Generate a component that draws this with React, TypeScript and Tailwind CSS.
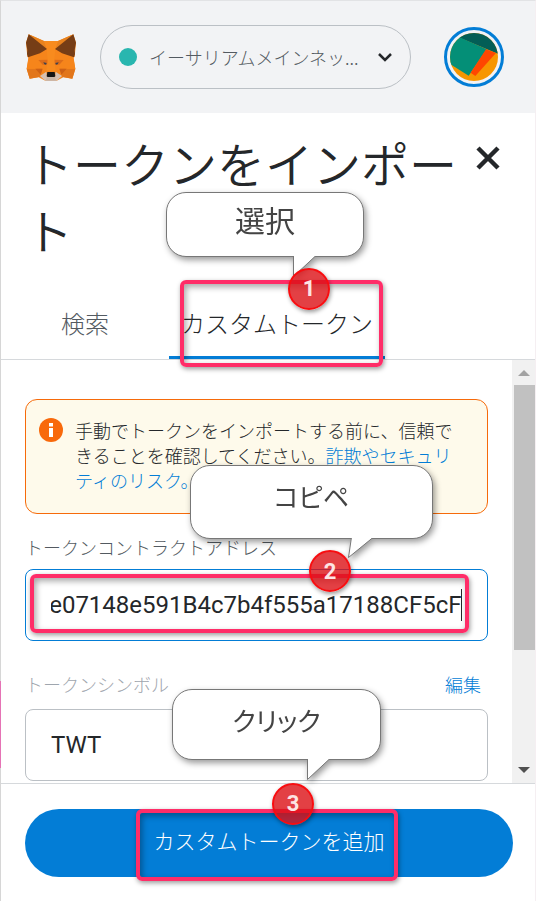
import React, { useEffect, useRef } from "react";

const FoxLogo = () => (
  <svg
    viewBox="78 100 150 141"
    className="w-[50px] h-[47px] shrink-0"
    role="img"
    aria-label="MetaMask"
  >
    <path d="M86 101 132 121H174L220 101 228 126 224 168 220 172 226 205 217 234 190 230 170 240H136L116 230 89 234 80 205 86 172 82 168 78 126Z" fill="#f6851b" />
    {/* cheeks and brows */}
    <path d="M80 204 126 204 120 228 89 234ZM226 204 180 204 186 228 217 234Z" fill="#e2761b" />
    <path d="M86 101 132 121 140 144ZM220 101 174 121 166 144Z" fill="#e8821e" />
    <path d="M85 172 118 178 110 204 80 204ZM221 172 188 178 196 204 226 204Z" fill="#f6851b" />
    <path d="M115 178 143 177 145 192 128 192ZM191 178 163 177 161 192 178 192Z" fill="#dd6d1a" />
    <path d="M106 204 128 204 122 222ZM200 204 178 204 184 222Z" fill="#cd6116" />
    <path d="M132 121 174 121 166 145 163 177 167 212H139L143 177 140 145Z" fill="#f88b1e" />
    {/* ears */}
    <path d="M86 101 141 145 120 158 84 170 81 160 82 148 78 126Z" fill="#763d16" />
    <path d="M220 101 165 145 186 158 222 170 225 160 224 148 228 126Z" fill="#763d16" />
    {/* eyes and muzzle */}
    <path d="M130 185 140 187 138 192 133 191ZM176 185 166 187 168 192 173 191Z" fill="#3b4250" />
    <path d="M139 213 120 226 136 240H170L186 226 167 213 165 228H141Z" fill="#d7c1b3" />
    <path d="M142 214H164L166 227 163 229H143L140 227Z" fill="#161616" />
    <path d="M141 229H165L169 240H137Z" fill="#c9b6a8" />
  </svg>
);

const Avatar = () => (
  <button
    aria-label="アカウント"
    className="w-[60px] h-[60px] shrink-0 rounded-full border-[3px] border-[#037dd6] bg-[#f2f3f5] p-[3px]"
  >
    <svg viewBox="552 98 144 144" className="w-full h-full rounded-full">
      <rect x="552" y="98" width="144" height="144" fill="#f79600" />
      <path d="M552 98H696V160L584 114Z" fill="#035e56" />
      <path d="M552 98 584 112 662 147 608 226 552 191Z" fill="#048f77" />
      <path d="M660 147 690 158 628 227 614 217Z" fill="#ff4600" />
    </svg>
  </button>
);

interface IBalloonProps {
  text: string;
  className: string;
  tailClass: string;
  tail: string;
}

const Balloon = ({ text, className, tailClass, tail }: IBalloonProps) => (
  <div
    className={`absolute z-10 rounded-[20px] border border-[#777] bg-white text-center font-normal text-[#444] [font-feature-settings:'palt'] drop-shadow-[2px_3px_3px_rgba(0,0,0,0.4)] ${className}`}
  >
    {text}
    <svg viewBox="0 0 28 22" className={`absolute top-full h-[22px] w-7 ${tailClass}`}>
      <path d={tail} fill="#fff" stroke="#777" />
    </svg>
  </div>
);

const Badge = ({ n, className }: { n: number; className: string }) => (
  <span
    className={`absolute z-20 flex h-[42px] w-[42px] items-center justify-center rounded-full border-2 border-[#f80d10] bg-[#dc1015]/80 font-['Roboto',sans-serif] text-[22px] font-bold text-[#fde4e4] shadow-[1px_2px_4px_rgba(0,0,0,0.4)] ${className}`}
  >
    {n}
  </span>
);

const Marker = ({ className }: { className: string }) => (
  <span
    className={`pointer-events-none absolute rounded-md border-4 border-[#ff2d68] shadow-[1px_2px_5px_rgba(0,0,0,0.4),inset_2px_3px_6px_rgba(0,0,0,0.35)] ${className}`}
  />
);

const App = () => {
  const addressRef = useRef<HTMLInputElement>(null);

  // keep the end of the address in view
  useEffect(() => {
    if (addressRef.current) {
      addressRef.current.scrollLeft = addressRef.current.scrollWidth;
    }
  }, []);

  return (
    <div className="min-h-screen border-x border-t border-l-[#d6d6d6] border-r-[#f5eff2] border-t-[#e2e3e5] bg-white font-['Noto_Sans_CJK_JP',sans-serif] font-light text-[#24272a]">
      <header className="flex h-28 items-center bg-[#f2f3f5] pl-[25px] pr-[31px]">
        <FoxLogo />
        <button className="ml-6 mr-[33px] flex h-16 min-w-0 flex-1 items-center rounded-full border border-[#bbc0c5] pl-[18px] pr-[17px]">
          <span className="h-[18px] w-[18px] shrink-0 rounded-full bg-[#29b6af]" />
          <span className="ml-3 min-w-0 flex-1 text-left text-lg text-[#535a61]">
            イーサリアムメインネッ...
          </span>
          <svg viewBox="0 0 16 10" className="h-[10px] w-4 shrink-0">
            <path d="M2 2 8 8 14 2" fill="none" stroke="#24272a" strokeWidth="2.5" />
          </svg>
        </button>
        <Avatar />
      </header>

      <div className="relative flex items-start gap-3 pl-6 pr-[35px] pt-4">
        <h1 className="flex-1 text-5xl leading-[67px] font-[350]">トークンをインポート</h1>
        <button aria-label="閉じる" className="mt-[17px] h-6 w-6">
          <svg viewBox="0 0 24 24" className="h-6 w-6">
            <path d="M2 2 22 22M22 2 2 22" stroke="#24272a" strokeWidth="4.5" />
          </svg>
        </button>
        <Balloon
          text="選択"
          className="left-[165px] top-[79px] h-[65px] w-[198px] text-[30px] leading-[52px]"
          tailClass="left-[125px]"
          tail="M1.5 -1V20.5L24 -0.5"
        />
      </div>

      <div role="tablist" className="mt-7 flex gap-12 border-b border-[#d6d9dc] pl-12">
        <button
          role="tab"
          aria-selected="false"
          className="border-b-[3px] border-transparent px-3 pt-[14px] pb-[15px] text-2xl leading-9 text-[#535a61]"
        >
          検索
        </button>
        <button
          role="tab"
          aria-selected="true"
          className="relative border-b-[3px] border-[#037dd6] px-3 pt-[14px] pb-[15px] text-2xl leading-9"
        >
          カスタムトークン
          <Marker className="-top-[11px] left-[11px] h-[87px] w-[203px]" />
          <Badge n={1} className="-top-[23px] left-[119px]" />
        </button>
      </div>

      <div className="relative flex">
        <span className="absolute -left-px top-[321px] h-[87px] w-px bg-[#e573b5]" />
        <form className="min-w-0 flex-1 px-6 pt-[39px] pb-[2px]">
          <div className="relative flex items-start gap-3 rounded-xl border border-[#f66a0a] bg-[#fefaeb] pt-[18px] pr-6 pb-5 pl-[13px]">
            <svg viewBox="0 0 24 24" className="h-6 w-6 shrink-0">
              <circle cx="12" cy="12" r="12" fill="#f8690b" />
              <rect x="10" y="5" width="4" height="3.5" fill="#fff" />
              <rect x="10" y="10" width="4" height="9" fill="#fff" />
            </svg>
            <p className="text-lg leading-[25px]">
              手動でトークンをインポートする前に、信頼できることを確認してください。
              <a href="#risk" className="text-[#037dd6]">
                詐欺やセキュリティのリスク。
              </a>
            </p>
            <Balloon
              text="コピペ"
              className="left-[164px] top-[65px] h-[74px] w-[243px] text-[26px] leading-[60px]"
              tailClass="left-[156px]"
              tail="M4.5 -1 1.5 19.5 26 -0.5"
            />
          </div>

          <label htmlFor="address" className="mt-5 mb-2 block text-lg leading-[27px] text-[#535a61]">
            トークンコントラクトアドレス
          </label>
          <div className="relative flex h-[72px] items-center rounded-lg border border-[#037dd6] pr-[25px] pl-[25px]">
            <input
              id="address"
              ref={addressRef}
              defaultValue="0xe07148e591B4c7b4f555a17188CF5cF"
              className="h-8 w-full border-r border-[#24272a] font-['Roboto',sans-serif] text-2xl font-normal outline-none"
            />
            <Marker className="top-1 right-[18px] left-1 h-[59px]" />
            <Badge n={2} className="-top-5 left-[283px]" />
          </div>

          <div className="mt-[30px] mb-[11px] flex justify-between text-lg leading-[27px]">
            <label htmlFor="symbol" className="text-[#9fa6ae]">
              トークンシンボル
            </label>
            <button type="button" className="mr-[7px] text-[#037dd6]">
              編集
            </button>
          </div>
          <div className="relative">
            <input
              id="symbol"
              defaultValue="TWT"
              className="block h-[72px] w-full rounded-lg border border-[#bbc0c5] px-[25px] font-['Roboto',sans-serif] text-2xl font-normal outline-none"
            />
            <Balloon
              text="クリック"
              className="left-[147px] -top-5 h-[71px] w-[209px] text-[26px] leading-[60px]"
              tailClass="left-[133px]"
              tail="M1.5 -1V20.5L24 -0.5"
            />
          </div>
        </form>

        <div aria-hidden="true" className="flex w-[23px] flex-col items-center bg-[#f1f1f1]">
          <svg viewBox="0 0 12 6" className="mt-[10px] mb-[9px] h-[6px] w-3">
            <path d="M0 6 6 0 12 6Z" fill="#a3a3a3" />
          </svg>
          <span className="ml-[2px] h-[265px] w-[21px] bg-[#c1c1c1]" />
          <svg viewBox="0 0 12 6" className="mt-auto mb-[10px] h-[6px] w-3">
            <path d="M0 0 6 6 12 0Z" fill="#505050" />
          </svg>
        </div>
      </div>

      <footer className="border-t border-[#d6d9dc] pt-[25px] pr-[22px] pb-6 pl-6">
        <button className="relative block h-[68px] w-full rounded-full bg-[#037dd6] pb-[6px] text-[21px] leading-8 text-white">
          カスタムトークンを追加
          <Marker className="top-0 left-1/2 -ml-[133px] h-[72px] w-[262px]" />
          <Badge n={3} className="-top-[26px] left-1/2 ml-[3px]" />
        </button>
      </footer>
    </div>
  );
};

export default App;
